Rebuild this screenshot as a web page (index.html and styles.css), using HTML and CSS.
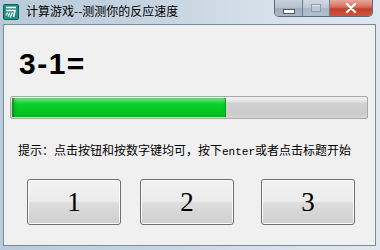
FILE: index.html
```html
<!DOCTYPE html>
<html>
<head>
<meta charset="utf-8">
<link rel="stylesheet" href="styles.css">
</head>
<body>
<div class="window">
  <div class="titlebar">
    <svg class="appicon" width="16" height="16" viewBox="0 0 16 16">
      <rect x="0.5" y="0.5" width="15" height="15" rx="1" fill="#1f8f86" stroke="#0d5f5a"/>
      <path d="M3 3.5h10" stroke="#fff" stroke-width="1.6"/>
      <path d="M3 6.5h9l-1.5 6.5" stroke="#fff" stroke-width="1.5" fill="none"/>
      <path d="M4.5 8.5l-1.5 3M7 8.5l-2 4M9.5 8.5l-2.5 5" stroke="#fff" stroke-width="1.3"/>
    </svg>
    <span class="title">计算游戏--测测你的反应速度</span>
    <div class="caption">
      <div class="cbtn min"><span class="minbar"></span></div>
      <div class="cbtn max"><span class="maxbox"></span></div>
      <div class="cbtn close">
        <svg width="14" height="10" viewBox="0 0 14 10"><path d="M3 1l8 8M11 1l-8 8" stroke="#fff" stroke-width="2.4" stroke-linecap="round"/></svg>
      </div>
    </div>
  </div>
  <div class="client">
    <div class="expr">3-1=</div>
    <div class="progress"><div class="fill" style="width:60.5%"></div></div>
    <div class="hint">提示：点击按钮和按数字键均可，按下<span class="mono">enter</span>或者点击标题开始</div>
    <div class="buttons">
      <button class="btn">1</button>
      <button class="btn">2</button>
      <button class="btn third">3</button>
    </div>
  </div>
</div>
</body>
</html>
```
FILE: styles.css
```css
html, body {
  margin: 0;
  padding: 0;
  width: 380px;
  height: 250px;
  overflow: hidden;
}
.window {
  width: 380px;
  height: 250px;
  box-sizing: border-box;
  background: linear-gradient(90deg, #b9cad9 0%, #c6d4e1 40%, #d5e0ea 70%, #dfe8f0 100%);
  padding: 0 4px 4px 3px;
  display: flex;
  flex-direction: column;
}
.titlebar {
  height: 24px;
  display: flex;
  align-items: flex-start;
  position: relative;
}
.appicon {
  margin-top: 4px;
  flex: none;
}
.title {
  margin-left: 7px;
  margin-top: 3px;
  font-family: "Noto Sans CJK SC", sans-serif;
  font-size: 12px;
  line-height: 16px;
  color: #000;
}
.caption {
  margin-left: auto;
  display: flex;
  height: 16px;
  margin-right: 3px;
  border: 1px solid #5b6b7d;
  border-top: none;
  border-radius: 0 0 5px 5px;
  overflow: hidden;
}
.cbtn {
  height: 16px;
  display: flex;
  align-items: center;
  justify-content: center;
}
.min {
  width: 27px;
  background: linear-gradient(180deg, #c8d2dd 0%, #b3c0ce 50%, #9eadbd 51%, #a9b7c6 100%);
  border-right: 1px solid #6e7f91;
}
.max {
  width: 26px;
  background: linear-gradient(180deg, #cfd8e2 0%, #bcc7d3 50%, #aab7c5 51%, #b4c0cd 100%);
  border-right: 1px solid #6e7f91;
}
.close {
  width: 42px;
  background: linear-gradient(180deg, #e9a99c 0%, #d46c5c 45%, #c2412d 55%, #d2553e 100%);
}
.minbar {
  width: 10px;
  height: 3px;
  margin-top: 6px;
  background: #fff;
  border: 1px solid #4d5b6b;
}
.maxbox {
  width: 8px;
  height: 6px;
  border: 1px solid #8e9aa8;
  background: #c0c9d3;
  box-shadow: inset 0 1px 0 #dfe5eb;
}
.client {
  flex: 1;
  background: #f0f0f0;
  border: 1px solid #7d8a98;
  display: flex;
  flex-direction: column;
}
.expr {
  margin: 22px 0 0 15px;
  font-family: "Liberation Sans", Arial, sans-serif;
  font-weight: bold;
  font-size: 30px;
  line-height: 34px;
  letter-spacing: 1.5px;
  color: #000;
}
.progress {
  margin: 15px 0 0 6px;
  width: 358px;
  height: 23px;
  box-sizing: border-box;
  border: 1px solid #a9a9a9;
  border-radius: 2px;
  background: linear-gradient(180deg, #f3f3f3 0%, #e4e4e4 20%, #d1d1d1 30%, #cbcbcb 80%, #d6d6d6 100%);
  padding: 1px;
  display: flex;
}
.fill {
  height: 100%;
  background: linear-gradient(180deg, #7ee88c 0%, #2ad444 22%, #06ce24 35%, #06c522 80%, #10b82a 100%);
  box-shadow: inset 3px 0 3px -1px #0a8a1c, inset -2px 0 2px -1px #0a9a20;
}
.hint {
  margin: 22px 0 0 14px;
  font-family: "Noto Sans CJK SC", sans-serif;
  font-size: 12px;
  line-height: 18px;
  color: #000;
  white-space: nowrap;
}
.mono {
  font-family: "Liberation Mono", monospace;
  font-size: 11px;
}
.buttons {
  margin: 18px 0 0 23px;
  display: flex;
  gap: 19px;
}
.btn {
  width: 94px;
  height: 46px;
  box-sizing: border-box;
  border: 1px solid #707070;
  border-radius: 3px;
  background: linear-gradient(180deg, #f2f2f2 0%, #ebebeb 48%, #dddddd 52%, #cfcfcf 100%);
  box-shadow: inset 0 0 0 1px #fcfcfc;
  font-family: "Liberation Serif", "Times New Roman", serif;
  font-size: 27px;
  color: #000;
  padding: 0;
  display: flex;
  align-items: center;
  justify-content: center;
}
.third {
  margin-left: 8px;
}
```
